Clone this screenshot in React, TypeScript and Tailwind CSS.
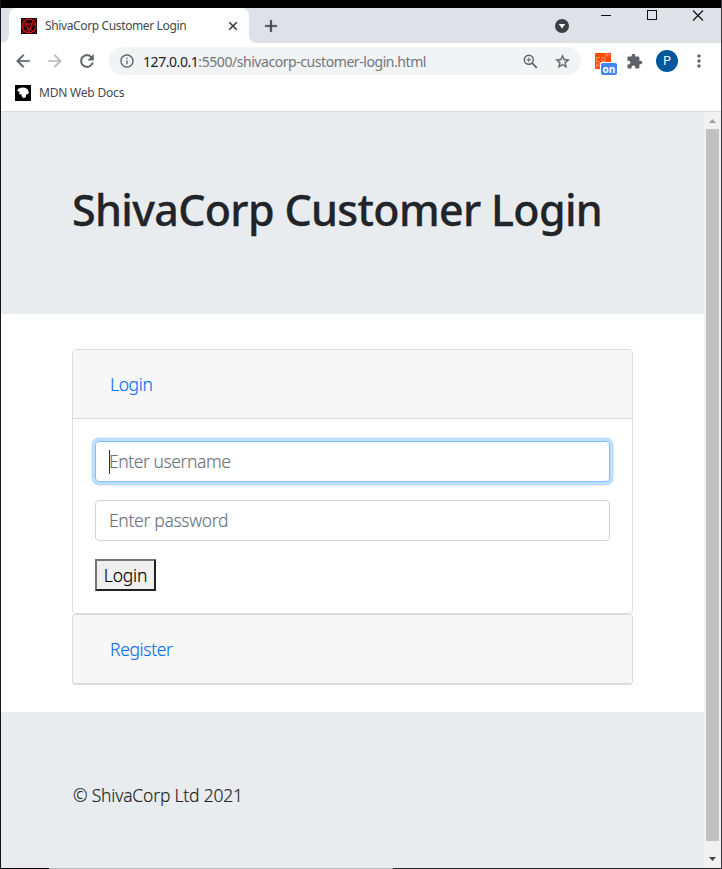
import React from "react";
import { MdArrowBack, MdArrowForward, MdRefresh, MdExtension, MdStarBorder, MdInfoOutline, MdMoreVert, MdClose, MdAdd } from "react-icons/md";

function TabStrip() {
  return (
    <div className="flex h-[35px] bg-[#dee1e6]">
      <div className="flex w-2 items-end bg-white">
        <div className="h-full w-full rounded-br-[8px] bg-[#dee1e6]" />
      </div>
      <div className="bg-[#dee1e6]">
        <div className="flex h-[35px] w-[240px] items-center rounded-t-[8px] bg-white pl-3">
          <svg width="16" height="16" viewBox="0 0 16 16" className="shrink-0" fill="none" stroke="#d4161d" strokeWidth="0.900">
            <rect width="16" height="16" fill="#160204" stroke="none" />
            <circle cx="8" cy="8" r="6.800" strokeWidth="1.200" />
            <path d="M1 1l3 2.500M15 1l-3 2.500M1 15l3-2.500M15 15l-3-2.500M4 2.500l4 12 4-12M1.500 6h13L4 13.500M1.500 6L12 13.500M5.500 5l2.500 2.500L10.500 5" />
          </svg>
          <span className="ml-2 w-[142px] whitespace-nowrap text-[12px] tracking-[-0.370px] text-[#45494d]">ShivaCorp Customer Login</span>
          <MdClose size={14} className="ml-[39px] text-[#3c4043] [&>path:last-child]:stroke-[1]" />
        </div>
      </div>
      <div className="flex flex-1 bg-white">
        <div className="flex flex-1 rounded-bl-[8px] bg-[#dee1e6]">
          <MdAdd size={20} className="ml-3 mt-2 text-[#3c4043] [&>path:last-child]:stroke-[0.400]" />
          <svg width="14" height="14" viewBox="0 0 14 14" className="ml-[274px] mt-[11px]">
            <circle cx="7" cy="7" r="7" fill="#3c4043" />
            <path d="M3.800 5h6.400L7 9.600z" fill="#fff" />
          </svg>
          <svg width="104" height="12" viewBox="0 0 104 12" className="ml-8 mt-[1px]" fill="none" stroke="#111" strokeWidth="1">
            <path d="M0 6.500h10" />
            <path d="M92 1.500l10 10M102 1.500l-10 10" strokeWidth="1.200" />
            <rect x="46.500" y="1.500" width="9" height="9" />
          </svg>
        </div>
      </div>
    </div>
  );
}

function Toolbar() {
  return (
    <div className="flex h-[37px] items-center bg-white pb-px">
      <MdArrowBack size={20} className="ml-3 text-[#5f6368] [&>path:last-child]:stroke-[0.300]" />
      <MdArrowForward size={20} className="ml-3 text-[#babcbe] [&>path:last-child]:stroke-[0.300]" />
      <MdRefresh size={20} className="ml-3 text-[#5f6368] [&>path:last-child]:stroke-[0.400]" />
      <div className="ml-3 flex h-7 w-[472px] items-center rounded-full bg-[#f1f3f4] pl-[10px]">
        <MdInfoOutline size={16} className="text-[#5f6368]" />
        <span className="ml-2 w-[284px] whitespace-nowrap text-[14px] tracking-[-0.440px] text-[#72767a]">
          <span className="text-[#202124]">127.0.0.1</span>:5500/shivacorp-customer-login.html
        </span>
        <svg width="15" height="15" viewBox="0 0 15 15" className="ml-[96px]" fill="none" stroke="#5f6368" strokeWidth="1.400">
          <circle cx="5.800" cy="5.800" r="4.500" />
          <path d="M9.200 9.200l4.600 4.600" strokeWidth="1.700" />
          <path d="M3.500 5.800h4.600M5.800 3.500v4.600" strokeWidth="1" />
        </svg>
        <MdStarBorder size={17} className="ml-4 text-[#5f6368] [&>path:last-child]:stroke-[0.400]" />
      </div>
      <div className="relative ml-[14px] mt-[-1px] size-4 shrink-0 rounded-[1px] bg-[#fb4b0b]">
        <svg width="16" height="16" viewBox="0 0 16 16" fill="none" stroke="#ffa078" strokeWidth="0.800">
          <path d="M5 4.500H1.500v4H5M7 4.500h3v4H7zM10.500 3.500v-2h4v2M12.500 1.500v2M1.500 14v-3h4v2h-4" />
        </svg>
        <span className="absolute left-[6px] top-[10px] flex h-3 w-4 items-center justify-center rounded-[2px] bg-[#4285f4] font-['Open_Sans',sans-serif] text-[10px] font-bold leading-none text-white shadow-[-1px_-1px_0_#fff]">on</span>
      </div>
      <MdExtension size={17} className="ml-[15px] text-[#5f6368]" />
      <span className="ml-[13px] flex size-[22px] items-center justify-center rounded-full bg-[#01579b] font-[Roboto,sans-serif] text-[12px] text-white">P</span>
      <MdMoreVert size={20} className="ml-[11px] text-[#5f6368]" />
    </div>
  );
}

function Bookmarks() {
  return (
    <div className="flex h-[32px] items-center border-b border-[#d9dcdf] bg-white pb-[7px] pl-[14px]">
      <svg width="16" height="16" viewBox="0 0 16 16" className="mt-[2px]">
        <rect width="16" height="16" fill="#000" />
        <path d="M2 5.500L3.800 3.500l3-1 3.500.2 2.500 1.800 1 2.500-.6 2-2 .5-.4 2.500-2 1.300-2-1.800-.6-2.500L4 9.500 4.500 7z" fill="#fff" />
      </svg>
      <span className="ml-2 mt-[2px] text-[12px] tracking-[-0.200px] text-[#45494d]">MDN Web Docs</span>
    </div>
  );
}

function CardHeader({ label }: { label: string }) {
  return (
    <div className="flex h-[68px] items-center bg-[#f7f7f7] pl-[37px] pt-px">
      <a className="text-[17.500px] font-light tracking-[-0.360px] text-[#0b6fe8] [-webkit-text-stroke:0.150px]">{label}</a>
    </div>
  );
}

function LoginForm() {
  return (
    <div className="flex h-[195px] flex-col items-start border-t border-[#d8d8d8] px-[22px] pt-[22px]">
      <div className="flex h-[41px] w-full items-center rounded-[4px] border border-[#80bdff] pl-[13px] shadow-[0_0_0_3.500px_#bfdeff]">
        <span className="h-6 w-px bg-[#333]" />
        <span className="ml-[-1px] text-[17.500px] font-light tracking-[-0.430px] text-[#6c757d] [-webkit-text-stroke:0.150px]">Enter username</span>
      </div>
      <div className="mt-[18px] flex h-[41px] w-full items-center rounded-[4px] border border-[#ced4da] pl-[13px]">
        <span className="text-[17.500px] font-light tracking-[-0.320px] text-[#6c757d] [-webkit-text-stroke:0.150px]">Enter password</span>
      </div>
      <button className="mt-[18px] flex h-8 w-[61px] items-center justify-center border-2 border-b-[#222] border-l-[#767676] border-r-[#222] border-t-[#767676] bg-[#efefef] text-[17.500px] font-light tracking-[-0.200px] text-black [-webkit-text-stroke:0.150px]">Login</button>
    </div>
  );
}

function Scrollbar() {
  return (
    <div className="flex w-[17px] flex-col items-center bg-[#f1f1f1]">
      <svg width="17" height="17" viewBox="0 0 17 17"><path d="M5 11l3.500-4 3.500 4z" fill="#a0a0a0" /></svg>
      <div className="h-[712px] w-[13px] bg-[#c1c1c1]" />
      <svg width="17" height="27" viewBox="0 0 17 27"><path d="M5 16h7l-3.500 4z" fill="#444746" /></svg>
    </div>
  );
}

export default function App() {
  return (
    <div className="flex h-[869px] w-[722px] flex-col overflow-hidden border-l border-r border-l-[#17171b] border-r-[#3b3b3f] bg-white font-['Noto_Sans',sans-serif]">
      <div className="h-2 bg-black" />
      <TabStrip />
      <Toolbar />
      <Bookmarks />
      <div className="flex h-[756px]">
        <div className="flex w-[703px] flex-col">
          <header className="flex h-[202px] items-center bg-[#e9ecef] pb-[5px] pl-[71px]">
            <h1 className="whitespace-nowrap text-[43px] font-medium tracking-[-0.670px] text-[#212529] [-webkit-text-stroke:0.300px]">ShivaCorp Customer Login</h1>
          </header>
          <main className="h-[398px] pl-[71px] pt-[35px]">
            <section className="w-[561px] overflow-hidden rounded-[4px] border border-[#dfdfdf]">
              <CardHeader label="Login" />
              <LoginForm />
            </section>
            <section className="w-[561px] overflow-hidden rounded-[4px] border border-b-2 border-[#dadada]">
              <CardHeader label="Register" />
            </section>
          </main>
          <footer className="flex-1 bg-[#e9ecef] pl-[72px] pt-[70px]">
            <p className="text-[17.500px] font-light tracking-[-0.200px] text-[#212529] [-webkit-text-stroke:0.150px]">© ShivaCorp Ltd 2021</p>
          </footer>
        </div>
        <Scrollbar />
      </div>
      <div className="flex h-px">
        <div className="w-12 bg-black" />
        <div className="w-[344px] bg-[#b8b8b8]" />
        <div className="flex-1 bg-[#252525]" />
      </div>
    </div>
  );
}
